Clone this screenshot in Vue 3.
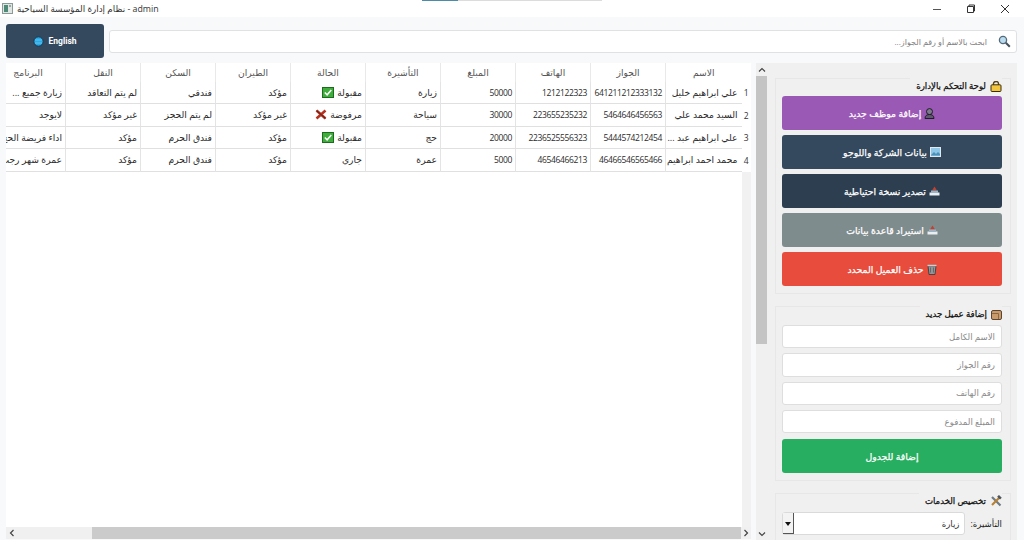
<script setup>
const headers = ['الاسم', 'الجواز', 'الهاتف', 'المبلغ', 'التأشيرة', 'الحالة', 'الطيران', 'السكن', 'النقل', 'البرنامج']

const rows = [
  { num: 1, status: 'ok', cells: ['علي ابراهيم خليل', '641211212333132', '1212122323', '50000', 'زيارة', 'مقبولة', 'مؤكد', 'فندقي', 'لم يتم التعاقد', 'زيارة جميع ...'] },
  { num: 2, status: 'no', cells: ['السيد محمد علي', '5464646456563', '223655235232', '30000', 'سياحة', 'مرفوضة', 'غير مؤكد', 'لم يتم الحجز', 'غير مؤكد', 'لايوجد'] },
  { num: 3, status: 'ok', cells: ['علي ابراهيم عبد ...', '5444574212454', '2236525556323', '20000', 'حج', 'مقبولة', 'مؤكد', 'فندق الحرم', 'مؤكد', 'اداء فريضة الحج'] },
  { num: 4, status: '', cells: ['محمد احمد ابراهيم', '46466546565466', '46546466213', '5000', 'عمرة', 'جاري', 'مؤكد', 'فندق الحرم', 'مؤكد', 'عمرة شهر رجب'] },
]

const adminButtons = [
  { text: 'إضافة موظف جديد', icon: 'person', cls: 'purple' },
  { text: 'بيانات الشركة واللوجو', icon: 'picture', cls: 'slate' },
  { text: 'تصدير نسخة احتياطية', icon: 'tray', cls: 'navy' },
  { text: 'استيراد قاعدة بيانات', icon: 'tray', cls: 'grey' },
  { text: 'حذف العميل المحدد', icon: 'trash', cls: 'red' },
]

const placeholders = ['الاسم الكامل', 'رقم الجواز', 'رقم الهاتف', 'المبلغ المدفوع']

const isNumber = (v) => /^\d+$/.test(v)
</script>

<template>
  <div class="window">
    <div class="tab-sliver"><span></span></div>

    <div class="titlebar">
      <svg class="app-icon" width="11" height="11" viewBox="0 0 11 11">
        <rect x="0.5" y="0.5" width="10" height="10" fill="#dfe6e4" stroke="#8a9a96" />
        <rect x="2" y="2" width="4" height="7" fill="#4f8a78" />
        <rect x="7" y="2" width="2" height="2" fill="#9aa7a4" />
      </svg>
      <span class="title-text">نظام إدارة المؤسسة السياحية - admin</span>
      <div class="win-controls">
        <svg width="10" height="10" viewBox="0 0 10 10"><path d="M1 5.5h8" stroke="#555" /></svg>
        <svg width="10" height="10" viewBox="0 0 10 10"><path d="M1.5 2.5h6v6h-6zM3 2.5V1h5.5v6H7.5" fill="none" stroke="#333" /></svg>
        <svg width="10" height="10" viewBox="0 0 10 10"><path d="M1 1l8 8M9 1l-8 8" stroke="#333" /></svg>
      </div>
    </div>

    <div class="toolbar">
      <button class="lang-btn">
        <svg width="11" height="11" viewBox="0 0 11 11">
          <circle cx="5.5" cy="5.5" r="4.7" fill="#29a9e6" stroke="#16384f" />
          <path d="M2 4h7M2 7h7" stroke="#7fd0f2" stroke-width="0.7" />
        </svg>
        <span>English</span>
      </button>
      <div class="search">
        <svg width="13" height="13" viewBox="0 0 13 13">
          <circle cx="5" cy="5" r="3.6" fill="#b9dcf0" stroke="#56697a" stroke-width="1.3" />
          <path d="M7.8 7.8l4 4" stroke="#44525e" stroke-width="2" />
        </svg>
        <span dir="rtl">ابحث بالاسم أو رقم الجواز...</span>
      </div>
    </div>

    <div class="main">
      <div class="table-area">
        <div class="table">
          <div class="grid-row head">
            <div class="vhead"></div>
            <div v-for="h in headers" :key="h" class="head-cell">{{ h }}</div>
          </div>
          <div v-for="row in rows" :key="row.num" class="grid-row body-row">
            <div class="vhead">{{ row.num }}</div>
            <div v-for="(cell, i) in row.cells" :key="i" class="cell" :class="{ first: i === 0, numeric: isNumber(cell) }">
              <span>{{ cell }}</span>
              <svg v-if="i === 5 && row.status === 'ok'" class="status-icon" width="12" height="11" viewBox="0 0 12 11">
                <rect x="0.5" y="0.5" width="11" height="10" fill="#3fae3c" stroke="#1c6b1e" />
                <path d="M2.8 5.5l2.3 2.3 4.2-4.8" fill="none" stroke="#fff" stroke-width="1.5" />
              </svg>
              <svg v-if="i === 5 && row.status === 'no'" class="status-icon" width="12" height="11" viewBox="0 0 12 11">
                <path d="M1.5 1.5l9 8M10.5 1.5l-9 8" stroke="#b5301f" stroke-width="2.6" />
                <path d="M1.5 1.5l9 8" stroke="#51251f" stroke-width="1" />
              </svg>
            </div>
          </div>
          <div class="table-fill"><div class="fill-strip"></div></div>
        </div>
        <div class="hscroll">
          <div class="hs-track">
            <svg width="6" height="8" viewBox="0 0 6 8"><path d="M4.5 1L1.5 4l3 3" fill="none" stroke="#444" stroke-width="1.2" /></svg>
          </div>
          <div class="hs-thumb"></div>
          <div class="hs-end">
            <svg width="6" height="8" viewBox="0 0 6 8"><path d="M1.5 1l3 3-3 3" fill="none" stroke="#444" stroke-width="1.2" /></svg>
          </div>
        </div>
      </div>

      <div class="side">
        <div class="vscroll">
          <div class="vs-arrow">
            <svg width="8" height="6" viewBox="0 0 8 6"><path d="M1 4.5L4 1.5l3 3" fill="none" stroke="#444" stroke-width="1.2" /></svg>
          </div>
          <div class="vs-thumb"></div>
          <div class="vs-rest"></div>
          <div class="vs-arrow">
            <svg width="8" height="6" viewBox="0 0 8 6"><path d="M1 1.5L4 4.5l3-3" fill="none" stroke="#444" stroke-width="1.2" /></svg>
          </div>
        </div>

        <div class="panel">
          <section class="group admin">
            <h3 class="group-title">
              <svg width="12" height="11" viewBox="0 0 12 11">
                <path d="M3.5 4V2.5a2.5 2 0 0 1 5 0V4" fill="none" stroke="#5a430c" stroke-width="1.4" />
                <rect x="1" y="3.8" width="10" height="6.7" rx="1" fill="#f3c53c" stroke="#3a2d0c" />
              </svg>
              <span>لوحة التحكم بالإدارة</span>
            </h3>
            <button v-for="b in adminButtons" :key="b.text" class="action" :class="b.cls">
              <svg v-if="b.icon === 'person'" width="11" height="11" viewBox="0 0 11 11">
                <circle cx="5.5" cy="3.6" r="3" fill="#7d7a8c" stroke="#1f1a28" />
                <path d="M1 10.5c0-3 2-4 4.500-4s4.500 1 4.500 4z" fill="#5d5a6c" stroke="#1f1a28" />
              </svg>
              <svg v-else-if="b.icon === 'picture'" width="11" height="10" viewBox="0 0 11 10">
                <rect x="0.5" y="0.5" width="10" height="9" fill="#8fc7e8" stroke="#dfe9ee" />
                <path d="M1 8l3-3 2 2 2-2 2 2v1.500H1z" fill="#4f8fb8" />
              </svg>
              <svg v-else-if="b.icon === 'tray'" width="11" height="10" viewBox="0 0 11 10">
                <path d="M3 4.500L5.500 0.500l2.500 4z" fill="#c2402f" />
                <path d="M0.500 6.500h10v3h-10z" fill="#e9eef2" />
                <path d="M2 4.500h7v2.500H2z" fill="#9db3c4" />
              </svg>
              <svg v-else width="10" height="11" viewBox="0 0 10 11">
                <path d="M1 2h8l-1 8.500H2z" fill="#8f9699" stroke="#333" stroke-width="0.8" />
                <path d="M0.500 1.500h9" stroke="#c9cfd1" stroke-width="1.5" />
                <path d="M3.500 3.500v5M6.500 3.500v5" stroke="#555" stroke-width="0.7" />
              </svg>
              <span>{{ b.text }}</span>
            </button>
          </section>

          <section class="group add">
            <h3 class="group-title">
              <svg width="11" height="11" viewBox="0 0 11 11">
                <rect x="0.5" y="1.5" width="10" height="9" rx="1.5" fill="#c99a6b" stroke="#5c4630" />
                <path d="M1 4.500h6.500V10" fill="none" stroke="#8a6844" />
              </svg>
              <span>إضافة عميل جديد</span>
            </h3>
            <div v-for="p in placeholders" :key="p" class="text-input">{{ p }}</div>
            <button class="action green"><span>إضافة للجدول</span></button>
          </section>

          <section class="group services">
            <h3 class="group-title">
              <svg width="12" height="12" viewBox="0 0 12 12">
                <path d="M2 2l8.500 8.500" stroke="#6f7b85" stroke-width="2.200" />
                <path d="M10 2L2 10" stroke="#b9802f" stroke-width="2.200" />
                <path d="M7.500 1h4v2.500h-4z" fill="#4d565e" transform="rotate(45 9.500 2.200)" />
              </svg>
              <span>تخصيص الخدمات</span>
            </h3>
            <div class="field">
              <label>التأشيرة:</label>
              <div class="combo">
                <span class="combo-value">زيارة</span>
                <span class="combo-arrow"></span>
              </div>
            </div>
          </section>
        </div>
      </div>
    </div>
  </div>
</template>

<style>
html, body {
  margin: 0;
  overflow: hidden;
}
</style>

<style scoped>
.window {
  position: relative;
  width: 1024px;
  height: 540px;
  display: flex;
  flex-direction: column;
  overflow: hidden;
  background: #f7f9fa;
  font-family: "Open Sans", "DejaVu Sans", sans-serif;
  font-size: 9.2px;
  color: #333;
}
.tab-sliver {
  position: absolute;
  top: 0;
  left: 422px;
  width: 180px;
  height: 1px;
  background: #dcdcdc;
}
.tab-sliver span {
  display: block;
  width: 36px;
  height: 1px;
  background: #4d8ba6;
}
.titlebar {
  height: 17px;
  flex: none;
  display: flex;
  align-items: center;
  background: #fff;
  padding-left: 2px;
}
.title-text {
  margin-left: 4px;
  font-size: 8.8px;
  color: #333;
}
.win-controls {
  margin-left: auto;
  display: flex;
  gap: 24px;
  padding-right: 14px;
}
.toolbar {
  height: 46px;
  flex: none;
  box-sizing: border-box;
  display: flex;
  align-items: center;
  gap: 5px;
  padding: 2px 7px 0 6px;
}
.lang-btn {
  width: 98px;
  height: 34px;
  display: flex;
  align-items: center;
  justify-content: center;
  gap: 4px;
  border: 0;
  border-radius: 3px;
  background: #34495e;
  color: #fff;
  font: bold 8.5px "Roboto", sans-serif;
}
.search {
  flex: 1;
  height: 23px;
  display: flex;
  flex-direction: row-reverse;
  align-items: center;
  gap: 11px;
  padding: 0 5px;
  box-sizing: border-box;
  background: #fff;
  border: 1px solid #dfe1e3;
  border-radius: 3px;
  color: #808080;
  font-size: 8px;
}
.main {
  flex: 1;
  min-height: 0;
  display: flex;
  padding-left: 6px;
  gap: 5px;
}
.table-area {
  width: 745px;
  display: flex;
  flex-direction: column;
}
.table {
  flex: 1;
  display: flex;
  flex-direction: column;
  overflow: hidden;
  background: #fff;
  direction: rtl;
}
.grid-row {
  display: grid;
  grid-template-columns: 9.5px 76.5px repeat(9, 75px);
  flex: none;
  width: 761px;
}
.head {
  height: 18.5px;
}
.head-cell {
  display: flex;
  align-items: center;
  justify-content: center;
  border-left: 1px solid #e9e9e9;
  box-sizing: border-box;
  color: #555;
}
.body-row {
  height: 22.5px;
}
.vhead {
  display: flex;
  align-items: center;
  justify-content: center;
  background: #fff;
  color: #333;
  font-size: 8.5px;
}
.cell {
  display: flex;
  align-items: center;
  gap: 3px;
  padding-right: 3px;
  box-sizing: border-box;
  white-space: nowrap;
  overflow: hidden;
  border-left: 1px solid #e4e4e4;
  border-bottom: 1px solid #e0e0e0;
  color: #2b2b2b;
}
.cell.first {
  padding-right: 4px;
}
.cell.numeric {
  font-size: 8.5px;
  letter-spacing: -0.36px;
}
.status-icon {
  flex: none;
}
.table-fill {
  flex: 1;
  display: flex;
}
.fill-strip {
  width: 9.5px;
  background: #f1f1f1;
}
.hscroll {
  height: 12px;
  flex: none;
  margin-bottom: 1px;
  display: flex;
  background: #f0f0f0;
}
.hs-track {
  width: 86px;
  display: flex;
  align-items: center;
  padding-left: 3px;
  box-sizing: border-box;
}
.hs-thumb {
  width: 649px;
  background: #cbcbcb;
}
.hs-end {
  flex: 1;
  display: flex;
  align-items: center;
  justify-content: center;
}
.side {
  width: 261px;
  display: flex;
  background: #f0f0f0;
  overflow: hidden;
}
.vscroll {
  width: 11px;
  flex: none;
  display: flex;
  flex-direction: column;
  background: #f0f0f0;
}
.vs-arrow {
  height: 13px;
  flex: none;
  display: flex;
  align-items: center;
  justify-content: center;
}
.vs-thumb {
  height: 268px;
  flex: none;
  background: #c4c4c4;
}
.vs-rest {
  flex: 1;
}
.panel {
  flex: 1;
  padding: 15px 6px 0 8px;
  display: flex;
  flex-direction: column;
  gap: 12px;
  direction: rtl;
}
.group {
  flex: none;
  display: flex;
  flex-direction: column;
  padding: 0 8px 7px 6px;
  border: 1px solid #e7e7e7;
  background: #f0f0f0;
}
.group-title {
  align-self: flex-start;
  display: flex;
  align-items: center;
  gap: 4px;
  height: 16px;
  margin: -1px 0 2px;
  padding-left: 6px;
  background: #f0f0f0;
  font-size: 8.6px;
  font-weight: normal;
  -webkit-text-stroke: 0.25px #111;
  color: #111;
}
.add .group-title {
  margin-bottom: 3px;
}
.action {
  height: 34px;
  margin-bottom: 5px;
  flex: none;
  display: flex;
  align-items: center;
  justify-content: center;
  gap: 3px;
  border: 0;
  border-radius: 3px;
  color: #fff;
  font: normal 9.3px "Open Sans", "DejaVu Sans", sans-serif;
  -webkit-text-stroke: 0.25px #fff;
  direction: rtl;
}
.action:last-child {
  margin-bottom: 0;
}
.purple { background: #9b59b6; }
.slate { background: #34495e; }
.navy { background: #2c3e50; }
.grey { background: #7f8c8d; }
.red { background: #e74c3c; }
.green { background: #27ae60; margin-top: 1px; }
.text-input {
  height: 23.33px;
  margin-bottom: 5px;
  flex: none;
  display: flex;
  align-items: center;
  padding: 0 6px;
  box-sizing: border-box;
  background: #fff;
  border: 1px solid #dedede;
  border-radius: 3px;
  color: #8a8a8a;
  font-size: 8.6px;
}
.field {
  display: flex;
  align-items: center;
  gap: 5px;
  margin-top: 1px;
  font-size: 8.6px;
}
.field label {
  color: #222;
}
.combo {
  flex: 1;
  height: 23px;
  display: flex;
  align-items: center;
  justify-content: space-between;
  padding-right: 5px;
  box-sizing: border-box;
  background: #fff;
  border: 1px solid #dadada;
  border-radius: 3px;
}
.combo-arrow {
  position: relative;
  width: 11px;
  height: 21px;
  box-sizing: border-box;
  background: #f3f3f3;
  border-right: 1px solid #555;
  border-bottom: 1px solid #555;
}
.combo-arrow::after {
  content: "";
  position: absolute;
  top: 9px;
  left: 2px;
  border-left: 3px solid transparent;
  border-right: 3px solid transparent;
  border-top: 4px solid #111;
}
</style>
